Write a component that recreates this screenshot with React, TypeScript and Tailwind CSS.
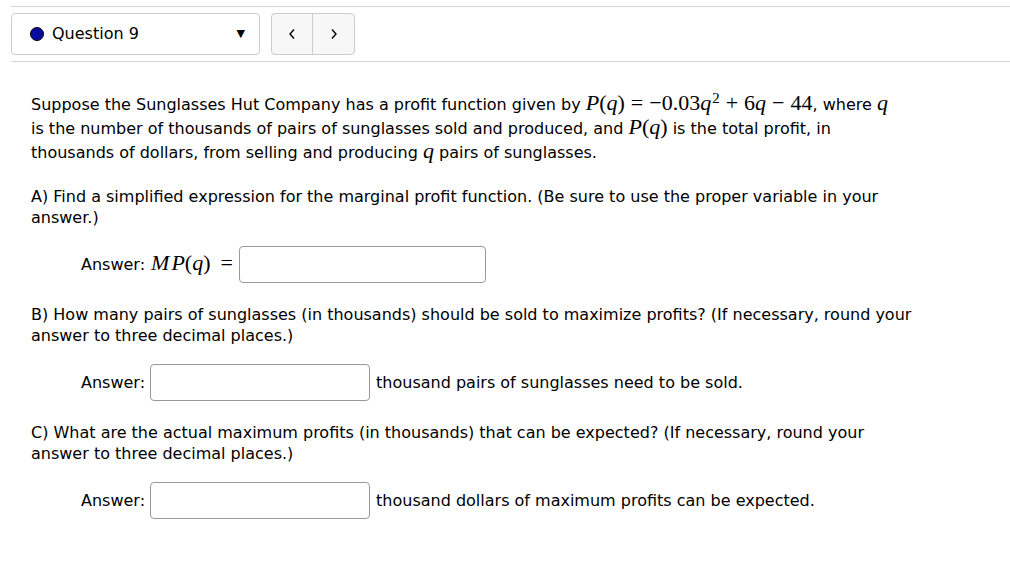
import React from "react";

const M = ({ children }: { children: React.ReactNode }) => (
  <span className="text-[22px] leading-[14px]" style={{ fontFamily: '"Liberation Serif","DejaVu Serif",serif' }}>
    {children}
  </span>
);
const I = ({ children }: { children: React.ReactNode }) => <i className="italic">{children}</i>;
const Op = ({ c }: { c: string }) => <span className="mx-[6px]">{c}</span>;

export default function App() {
  return (
    <div className="w-[1010px] h-[573px] bg-white text-black" style={{ fontFamily: '"DejaVu Sans", sans-serif' }}>
      <div className="ml-[11px] pt-[6px]">
        <div className="border-t border-[#d4d4d4]" />
        <div className="flex items-center gap-[11px] py-[6px]">
          <div className="w-[249px] h-[42px] border border-[#cccccc] rounded-[4px] flex items-center pl-[18px] pr-[14px]">
            <span className="w-[14px] h-[14px] rounded-full bg-[#0a0aa0] border border-black" />
            <span className="ml-[8px] text-[16px]">Question 9</span>
            <span className="ml-auto text-[11px]">▼</span>
          </div>
          <div className="flex h-[42px] border border-[#cccccc] rounded-[4px] bg-[#f7f7f7] overflow-hidden">
            <div className="w-[41px] flex items-center justify-center border-r border-[#cccccc]">
              <svg width="8" height="12" viewBox="0 0 8 12"><path d="M6 1.5 L2 6 L6 10.5" stroke="#000" strokeWidth="1.4" fill="none" /></svg>
            </div>
            <div className="w-[41px] flex items-center justify-center">
              <svg width="8" height="12" viewBox="0 0 8 12"><path d="M2 1.5 L6 6 L2 10.5" stroke="#000" strokeWidth="1.4" fill="none" /></svg>
            </div>
          </div>
        </div>
        <div className="border-t border-[#d4d4d4]" />
      </div>

      <div className="pl-[31px] pr-[40px] pt-[31px] text-[16px]">
        <p className="leading-[24px]">
          Suppose the Sunglasses Hut Company has a profit function given by <M><I>P</I>(<I>q</I>)<Op c="=" />−0.03<I>q</I><sup className="text-[15px] relative top-[-2px] leading-none align-top ml-[1px]">2</sup><Op c="+" />6<I>q</I><Op c="−" />44</M>, where <M><I>q</I></M>
          <br />
          is the number of thousands of pairs of sunglasses sold and produced, and <M><I>P</I>(<I>q</I>)</M> is the total profit, in
          <br />
          thousands of dollars, from selling and producing <M><I>q</I></M> pairs of sunglasses.
        </p>

        <p className="mt-[21px] leading-[21px]">
          A) Find a simplified expression for the marginal profit function. (Be sure to use the proper variable in your
          <br />
          answer.)
        </p>
        <div className="flex items-center mt-[18px] pl-[50px]">
          <span>Answer: </span>
          <span className="ml-[6px]"><M><I>M</I><span className="ml-[2px]" /><I>P</I>(<I>q</I>)<span className="ml-[10px] mr-[6px]">=</span></M></span>
          <div className="w-[247px] h-[37px] border border-[#999] rounded-[4px]" />
        </div>

        <p className="mt-[21px] leading-[21px]">
          B) How many pairs of sunglasses (in thousands) should be sold to maximize profits? (If necessary, round your
          <br />
          answer to three decimal places.)
        </p>
        <div className="flex items-center mt-[18px] pl-[50px]">
          <span>Answer:</span>
          <div className="ml-[5px] w-[220px] h-[37px] border border-[#999] rounded-[4px]" />
          <span className="ml-[6px]">thousand pairs of sunglasses need to be sold.</span>
        </div>

        <p className="mt-[21px] leading-[21px]">
          C) What are the actual maximum profits (in thousands) that can be expected? (If necessary, round your
          <br />
          answer to three decimal places.)
        </p>
        <div className="flex items-center mt-[18px] pl-[50px]">
          <span>Answer:</span>
          <div className="ml-[5px] w-[220px] h-[37px] border border-[#999] rounded-[4px]" />
          <span className="ml-[6px]">thousand dollars of maximum profits can be expected.</span>
        </div>
      </div>
    </div>
  );
}
